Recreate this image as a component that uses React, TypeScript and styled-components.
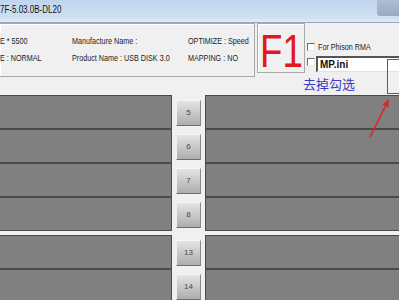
import React from "react";
import styled, { createGlobalStyle } from "styled-components";

const GlobalStyle = createGlobalStyle`
  html, body {
    margin: 0;
    padding: 0;
    background: #f0f0f0;
    overflow: hidden;
  }
  #root {
    width: 399px;
    height: 300px;
    overflow: hidden;
  }
`;

const slotGroups = [
  ["5", "6", "7", "8"],
  ["13", "14"],
];

const App: React.FunctionComponent = () => {
  return (
    <>
      <GlobalStyle />
      <Window>
        <TitleBar>
          <TitleTxt>7F-5.03.0B-DL20</TitleTxt>
          <WinButton />
        </TitleBar>
        <FrameEdge />

        <TopSection>
          <InfoPanel>
            <InfoTxt>E * 5500</InfoTxt>
            <InfoTxt>Manufacture Name :</InfoTxt>
            <InfoTxt>OPTIMIZE : Speed</InfoTxt>
            <InfoTxt>E : NORMAL</InfoTxt>
            <InfoTxt>Product Name : USB DISK 3.0</InfoTxt>
            <InfoTxt>MAPPING : NO</InfoTxt>
          </InfoPanel>
          <F1Box>
            <F1Txt>F1</F1Txt>
          </F1Box>
          <Options>
            <CheckRow>
              <CheckBox />
              <CheckLabel>For Phison RMA</CheckLabel>
            </CheckRow>
            <CheckRow>
              <CheckBox $offset={2} />
              <IniInput>MP.ini</IniInput>
            </CheckRow>
          </Options>
        </TopSection>

        <Slots>
          {slotGroups.map((group, gi) => (
            <SlotGroup key={gi}>
              {group.map((num) => (
                <SlotRow key={num}>
                  <SlotBar $side="left" />
                  <SlotCenter>
                    <NumButton>{num}</NumButton>
                  </SlotCenter>
                  <SlotBar $side="right" />
                </SlotRow>
              ))}
            </SlotGroup>
          ))}
        </Slots>

        {/* annotations drawn over the screenshot */}
        <NoteTxt>去掉勾选</NoteTxt>
        <RedBox />
        <ArrowSvg width="399" height="300" viewBox="0 0 399 300">
          <line x1="370" y1="137" x2="385.4" y2="106.2" stroke="#d42a2a" strokeWidth="1.6" />
          <polygon points="389,99 388.5,107.8 382.3,104.6" fill="#d42a2a" />
        </ArrowSvg>
      </Window>
    </>
  );
};

const Window = styled.div`
  position: relative;
  width: 399px;
  height: 300px;
  overflow: hidden;
  background: #f0f0f0;
  font-family: "Liberation Sans", Arial, sans-serif;
`;

const TitleBar = styled.div`
  height: 19px;
  display: flex;
  align-items: center;
  background: linear-gradient(#bfd4ec, #d2e1f2);
`;

const TitleTxt = styled.span`
  font-size: 10px;
  color: #111;
  white-space: nowrap;
  transform: scaleX(0.8);
  transform-origin: left center;
  margin-top: -1px;
`;

const WinButton = styled.div`
  margin-left: auto;
  align-self: flex-start;
  width: 22px;
  height: 16px;
  background: linear-gradient(#aebfd3, #98abc1);
  border-bottom-left-radius: 3px;
`;

const FrameEdge = styled.div`
  height: 3px;
  background: #dce7f4;
  border-bottom: 1px solid #9aa8b8;
`;

const TopSection = styled.div`
  display: flex;
  height: 54px;
`;

const InfoPanel = styled.div`
  box-sizing: border-box;
  width: 256px;
  height: 54px;
  margin-left: -1px;
  padding-top: 12px;
  border: 1px solid #a8a8a8;
  box-shadow: inset 1px 1px #fff;
  display: grid;
  grid-template-columns: 72px 116px auto;
  grid-auto-rows: 11px;
  row-gap: 6px;
`;

const InfoTxt = styled.span`
  font-size: 9px;
  line-height: 11px;
  color: #222;
  white-space: nowrap;
  transform: scaleX(0.8);
  transform-origin: left center;
`;

const F1Box = styled.div`
  box-sizing: border-box;
  width: 48px;
  height: 50px;
  margin-left: 2px;
  padding-top: 4px;
  border: 1px solid #a8a8a8;
  box-shadow: inset 1px 1px #fff;
  display: flex;
  align-items: center;
  justify-content: center;
`;

const F1Txt = styled.span`
  font-size: 47px;
  line-height: 1;
  color: #e3171d;
  transform: scaleX(0.78);
`;

const Options = styled.div`
  flex: 1;
  margin-left: 2px;
  padding-top: 19px;
  display: flex;
  flex-direction: column;
  gap: 3px;
  margin-right: -10px;
`;

const CheckRow = styled.div`
  display: flex;
  align-items: flex-start;
`;

const CheckBox = styled.div<{ $offset?: number }>`
  box-sizing: border-box;
  width: 8px;
  height: 8px;
  margin-top: ${(p) => p.$offset ?? 1}px;
  background: #fff;
  border-top: 1px solid #6c6c6c;
  border-left: 1px solid #6c6c6c;
  border-right: 1px solid #e8e8e8;
  border-bottom: 1px solid #e8e8e8;
`;

const CheckLabel = styled.span`
  margin-left: 3px;
  font-size: 9px;
  line-height: 11px;
  color: #222;
  white-space: nowrap;
  transform: scaleX(0.8);
  transform-origin: left center;
`;

const IniInput = styled.div`
  box-sizing: border-box;
  flex: 1;
  height: 16px;
  margin-left: 1px;
  padding-left: 2px;
  background: #fff;
  border-top: 2px solid #555;
  border-left: 2px solid #555;
  border-bottom: 1px solid #e2e2e2;
  font-size: 10px;
  font-weight: bold;
  line-height: 13px;
  color: #111;
`;

const Slots = styled.div`
  margin-top: 18px;
  display: flex;
  flex-direction: column;
  gap: 4px;
`;

const SlotGroup = styled.div`
  display: flex;
  flex-direction: column;
`;

const SlotRow = styled.div`
  display: grid;
  grid-template-columns: 172px 33px 1fr;
  height: 34px;
`;

const SlotBar = styled.div<{ $side: "left" | "right" }>`
  box-sizing: border-box;
  background: #808080;
  border: 1px solid #4a4a4a;
  ${(p) =>
    p.$side === "left"
      ? "border-left: none; margin-left: -2px;"
      : "border-right: none; margin-right: -2px;"}
`;

const SlotCenter = styled.div`
  display: flex;
  align-items: center;
  justify-content: center;
  padding-top: 1px;
`;

const NumButton = styled.div`
  box-sizing: border-box;
  width: 25px;
  height: 26px;
  display: flex;
  align-items: center;
  justify-content: center;
  background: linear-gradient(#e4e4e4, #adadad);
  border-top: 1px solid #f6f6f6;
  border-left: 1px solid #f0f0f0;
  border-right: 1px solid #8a8a8a;
  border-bottom: 1px solid #6e6e6e;
  font-size: 8px;
  color: #4a4a4a;
`;

const NoteTxt = styled.span`
  position: absolute;
  left: 303px;
  top: 77px;
  font-family: "Noto Sans CJK SC", sans-serif;
  font-size: 13px;
  line-height: 1;
  color: #3b3bc6;
  white-space: nowrap;
`;

const RedBox = styled.div`
  position: absolute;
  left: 387px;
  top: 59px;
  width: 20px;
  height: 33px;
  border: 1.5px solid #d42a2a;
`;

const ArrowSvg = styled.svg`
  position: absolute;
  left: 0;
  top: 0;
  pointer-events: none;
`;

export default App;
